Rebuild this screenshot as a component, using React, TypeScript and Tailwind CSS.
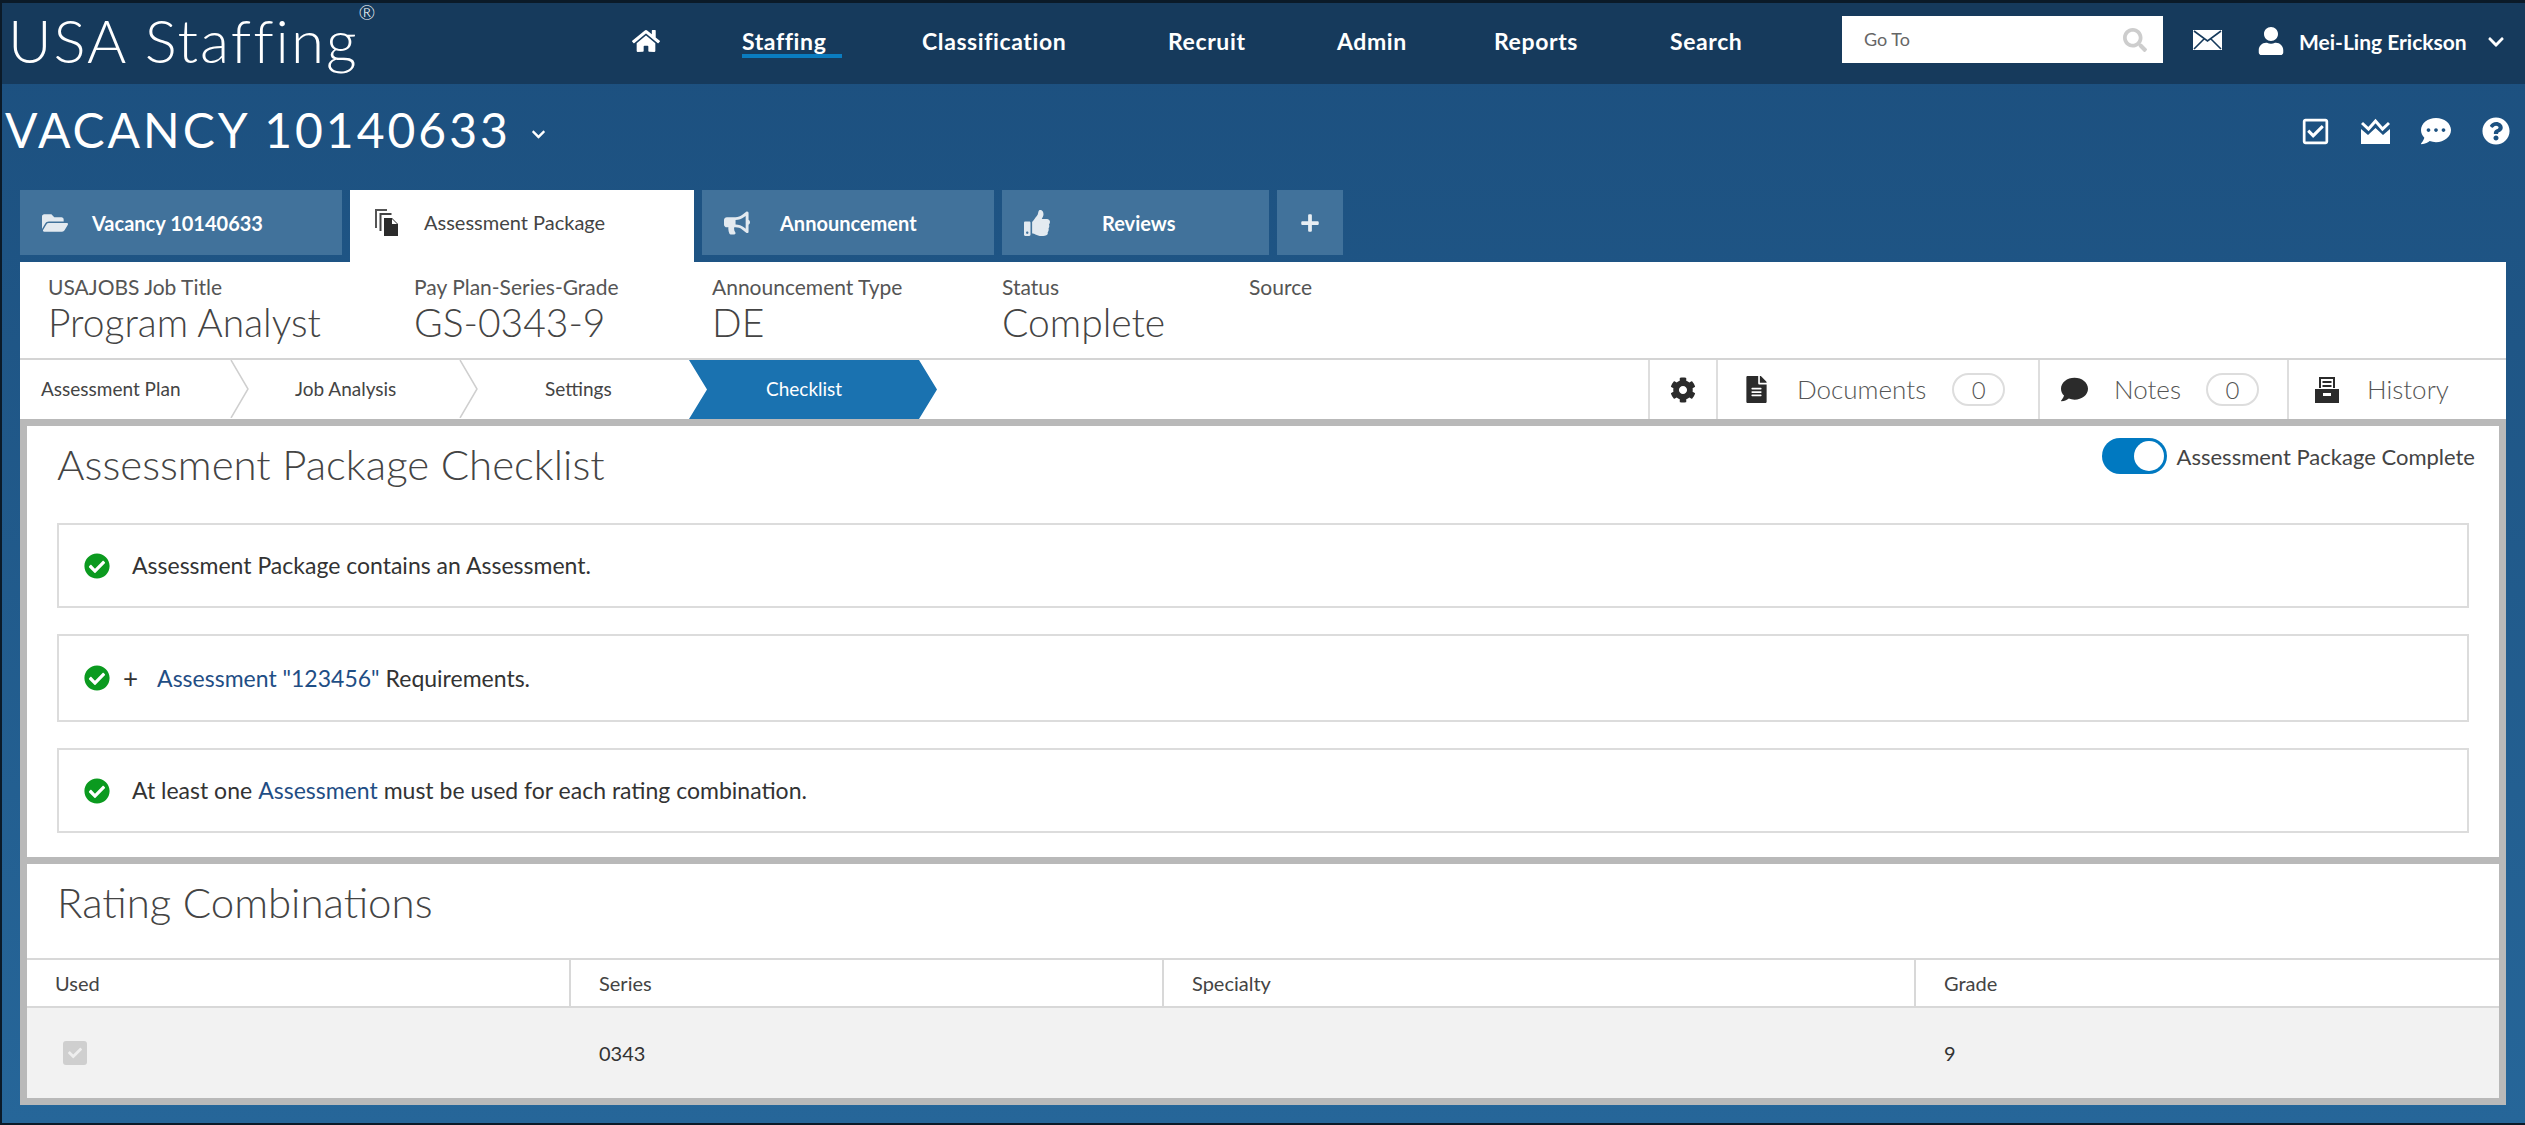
import React from 'react';
import {
    FaHome, FaFolderOpen, FaBullhorn, FaThumbsUp, FaPlus, FaCog, FaFileAlt, FaComment,
    FaCheckCircle, FaQuestionCircle, FaCommentDots, FaSearch, FaUser, FaChevronDown, FaRegCheckSquare, FaCheck
} from 'react-icons/fa';

const sans = "font-['Lato','Noto_Sans',sans-serif]";

const navItems = [
    { label: 'Staffing', width: 'w-[100px]', active: true },
    { label: 'Classification', width: 'w-[166px]', active: false },
    { label: 'Recruit', width: 'w-[89px]', active: false },
    { label: 'Admin', width: 'w-[77px]', active: false },
    { label: 'Reports', width: 'w-[96px]', active: false },
    { label: 'Search', width: 'w-[83px]', active: false },
];

const MailIcon = () => (
    <svg width="29" height="22" viewBox="0 0 29 22">
        <path fill="#fff" d="M0 1h29v20H0z" />
        <path fill="none" stroke="#163a5c" strokeWidth="1.6" d="M1 2l13.500 10L28 2M1 20l10-10M28 20L18 10" />
    </svg>
);

const FilesIcon = () => (
    <svg width="24" height="28" viewBox="0 0 24 28">
        <path fill="none" stroke="#555" strokeWidth="2" d="M2 20V2h11" />
        <path fill="none" stroke="#444" strokeWidth="2" d="M6.500 23V6h11" />
        <path fill="#2b2b2b" d="M10 10h8l6 6v12H10z" />
        <path fill="#fff" d="M18 11l5 5h-5z" />
    </svg>
);

const CrownIcon = () => (
    <svg width="29" height="26" viewBox="0 0 29 26">
        <path fill="#fff" d="M0 11l7 6 7.500-7 7.500 7 7-6v15H0z" />
        <path fill="none" stroke="#fff" strokeWidth="3" d="M1 5l6.500 6L14.500 3l7 8L28 5" />
    </svg>
);

const CardBoxIcon = () => (
    <svg width="26" height="28" viewBox="0 0 26 28">
        <path fill="none" stroke="#2b2b2b" strokeWidth="2" d="M6 12V2h14v10" />
        <path fill="#2b2b2b" d="M8.500 5h9v2h-9zM8.500 9h9v2h-9z" />
        <path fill="#2b2b2b" d="M1 13h24v14H1z" />
        <path fill="#fff" d="M9 17h8v3H9z" />
    </svg>
);

const Chevron = () => (
    <svg width="20" height="58" viewBox="0 0 20 58" className="shrink-0">
        <path fill="none" stroke="#cfcfcf" strokeWidth="1.500" d="M1 0l17 29L1 58" />
    </svg>
);

const Badge = () => (
    <span className="w-[53px] h-[33px] rounded-full border-2 border-[#dddddd] flex items-center justify-center text-[24px] text-[#555]">0</span>
);

const Tab = ({ icon, label, width, labelMl }: { icon: React.ReactNode; label: string; width: string; labelMl: string }) => (
    <div className={`${width} h-[65px] bg-[#41729b] flex items-center text-white text-[20px] font-bold pl-[22px]`}>
        <span className="w-[26px] flex justify-center text-[#e3eaf0]">{icon}</span>
        <span className={labelMl}>{label}</span>
    </div>
);

const InfoCol = ({ label, value, width }: { label: string; value?: string; width: string }) => (
    <div className={`${width} shrink-0 flex flex-col`}>
        <span className="h-[26px] leading-[26px] text-[21px] text-[#555]">{label}</span>
        {value && <span className="h-[44px] leading-[44px] text-[39px] font-light text-[#444]">{value}</span>}
    </div>
);

const CheckRow = ({ className, children }: { className: string; children: React.ReactNode }) => (
    <div className={`${className} border-2 border-[#dcdcdc] flex items-center pl-[25px] text-[23px] text-[#333]`}>
        <FaCheckCircle size={26} className="text-[#0b9a1f] shrink-0 mr-[22px]" />
        {children}
    </div>
);

export default function App() {
    return (
        <div className={`${sans} w-[2525px] h-[1125px] overflow-hidden border-t-[3px] border-l-2 border-b-2 border-[#0b1a28] bg-gradient-to-b from-[#1c4f7e] to-[#266699] flex flex-col`}>
            {/* top bar */}
            <div className="h-[81px] shrink-0 bg-[#163a5c] flex items-center text-white">
                <div className="w-[630px] shrink-0 pl-[6px] pb-[8px] text-[60px] font-light leading-none tracking-[2px] flex items-start">
                    USA Staffing<sup className="text-[20px] mt-[2px] top-0">®</sup>
                </div>
                <FaHome size={28} className="mr-[82px] mt-[-6px]" />
                <div className="flex gap-[80px] text-[23px] font-bold tracking-[0.6px] mt-[-4px]">
                    {navItems.map((n) => (
                        <div key={n.label} className={`${n.width} relative whitespace-nowrap`}>
                            {n.label}
                            {n.active && <div className="absolute left-0 right-0 top-[30px] h-[4px] bg-[#0a7cc0]" />}
                        </div>
                    ))}
                </div>
                <div className="ml-[89px] w-[321px] h-[47px] mt-[-8px] bg-white flex items-center justify-between pl-[22px] pr-[16px] text-[18px] text-[#666]">
                    Go To
                    <FaSearch size={24} className="text-[#cdcdcd]" />
                </div>
                <span className="ml-[30px] mt-[-8px]"><MailIcon /></span>
                <FaUser size={28} className="ml-[35px] mt-[-6px]" />
                <span className="ml-[14px] text-[21px] font-bold mt-[-4px] whitespace-nowrap">Mei-Ling Erickson</span>
                <FaChevronDown size={18} className="ml-[20px] mt-[-4px]" />
            </div>

            {/* vacancy title */}
            <div className="h-[106px] shrink-0 flex items-start text-white">
                <div className="pl-[3px] pt-[18px] text-[48px] font-normal leading-[56px] tracking-[3px] whitespace-nowrap flex items-center">
                    VACANCY 10140633
                    <FaChevronDown size={15} className="ml-[20px] mt-[8px]" />
                </div>
                <div className="ml-auto flex items-center gap-[31px] pt-[32px] pr-[15px]">
                    <FaRegCheckSquare size={29} />
                    <CrownIcon />
                    <FaCommentDots size={30} />
                    <FaQuestionCircle size={28} />
                </div>
            </div>

            {/* tabs */}
            <div className="h-[72px] shrink-0 flex gap-[8px] pl-[18px] items-start">
                <Tab icon={<FaFolderOpen size={26} />} label="Vacancy 10140633" width="w-[322px]" labelMl="ml-[24px]" />
                <div className="w-[344px] h-[72px] bg-white flex items-center pl-[24px] pb-[8px] text-[20px] text-[#444]">
                    <FilesIcon />
                    <span className="ml-[26px]">Assessment Package</span>
                </div>
                <Tab icon={<FaBullhorn size={26} />} label="Announcement" width="w-[292px]" labelMl="ml-[30px]" />
                <Tab icon={<FaThumbsUp size={26} />} label="Reviews" width="w-[267px]" labelMl="ml-[52px]" />
                <div className="w-[66px] h-[65px] bg-[#41729b] flex items-center justify-center text-[#e8eef3]">
                    <FaPlus size={20} />
                </div>
            </div>

            {/* white panel */}
            <div className="ml-[18px] w-[2486px] shrink-0 bg-white">
                <div className="h-[98px] flex pt-[12px] pl-[28px] border-b-2 border-[#d4d4d4]">
                    <InfoCol label="USAJOBS Job Title" value="Program Analyst" width="w-[366px]" />
                    <InfoCol label="Pay Plan-Series-Grade" value="GS-0343-9" width="w-[298px]" />
                    <InfoCol label="Announcement Type" value="DE" width="w-[290px]" />
                    <InfoCol label="Status" value="Complete" width="w-[247px]" />
                    <InfoCol label="Source" width="w-[200px]" />
                </div>

                {/* breadcrumb */}
                <div className="h-[59px] flex text-[19px] text-[#444]">
                    <div className="w-[210px] pl-[21px] flex items-center">Assessment Plan</div>
                    <Chevron />
                    <div className="w-[209px] pl-[45px] flex items-center">Job Analysis</div>
                    <Chevron />
                    <div className="w-[210px] pl-[66px] flex items-center">Settings</div>
                    <div className="w-[248px] bg-[#1a72b0] text-white flex items-center pl-[77px] [clip-path:polygon(0_0,230px_0,100%_50%,230px_100%,0_100%,18px_50%)]">Checklist</div>
                    <div className="ml-auto flex text-[26px] font-light text-[#555]">
                        <div className="w-[68px] border-l-2 border-[#dedede] flex items-center justify-center text-[#2b2b2b]"><FaCog size={26} /></div>
                        <div className="w-[322px] border-l-2 border-[#dedede] flex items-center pl-[25px]">
                            <FaFileAlt size={27} className="text-[#2b2b2b] mr-[27px]" />
                            <span className="mr-[26px]">Documents</span>
                            <Badge />
                        </div>
                        <div className="w-[249px] border-l-2 border-[#dedede] flex items-center pl-[21px]">
                            <FaComment size={27} className="text-[#2b2b2b] mr-[26px]" />
                            <span className="mr-[25px]">Notes</span>
                            <Badge />
                        </div>
                        <div className="w-[219px] border-l-2 border-[#dedede] flex items-center pl-[25px]">
                            <CardBoxIcon />
                            <span className="ml-[27px]">History</span>
                        </div>
                    </div>
                </div>

                {/* checklist + rating combinations */}
                <div className="border-x-[7px] border-y-[7px] border-[#b9b9b9] text-[#333]">
                    <div className="h-[431px] flex flex-col px-[30px] relative">
                        <div className="text-[42px] font-light leading-[50px] mt-[13px] text-[#444]">Assessment Package Checklist</div>
                        <div className="absolute top-[12px] right-[24px] flex items-center gap-[10px] text-[22px] text-[#444]">
                            <div className="w-[65px] h-[36px] rounded-full bg-[#0079c1] flex items-center justify-end pr-[3px]">
                                <div className="w-[30px] h-[30px] rounded-full bg-white" />
                            </div>
                            Assessment Package Complete
                        </div>
                        <CheckRow className="mt-[34px] h-[85px]">Assessment Package contains an Assessment.</CheckRow>
                        <CheckRow className="mt-[26px] h-[88px]">
                            <span className="mr-[19px] ml-[-9px] text-[26px]">+</span>
                            <span className="text-[#1f4e85]">Assessment "123456"</span>
                            <span className="ml-[6px]">Requirements.</span>
                        </CheckRow>
                        <CheckRow className="mt-[26px] h-[85px]">
                            At least one<span className="text-[#1f4e85] mx-[6px]">Assessment</span>must be used for each rating combination.
                        </CheckRow>
                    </div>
                    <div className="border-t-[7px] border-[#b9b9b9]">
                        <div className="h-[94px] flex items-start pl-[30px] pt-[13px] text-[42px] font-light leading-[50px] text-[#444]">Rating Combinations</div>
                        <div className="h-[50px] flex items-stretch border-y-2 border-[#d8d8d8] text-[20px] text-[#444]">
                            <div className="w-[542px] pl-[28px] flex items-center">Used</div>
                            <div className="w-[593px] pl-[28px] border-l-2 border-[#d8d8d8] flex items-center">Series</div>
                            <div className="w-[752px] pl-[28px] border-l-2 border-[#d8d8d8] flex items-center">Specialty</div>
                            <div className="flex-1 pl-[28px] border-l-2 border-[#d8d8d8] flex items-center">Grade</div>
                        </div>
                        <div className="h-[90px] flex items-center bg-[#f2f2f2] text-[20px] text-[#333]">
                            <div className="w-[542px] pl-[36px]">
                                <div className="w-[24px] h-[24px] rounded-[3px] bg-[#cfcfcf] flex items-center justify-center text-[#eeeeee]"><FaCheck size={14} /></div>
                            </div>
                            <div className="w-[593px] pl-[30px]">0343</div>
                            <div className="w-[752px] pl-[30px]" />
                            <div className="flex-1 pl-[30px]">9</div>
                        </div>
                    </div>
                </div>
            </div>
        </div>
    );
}
